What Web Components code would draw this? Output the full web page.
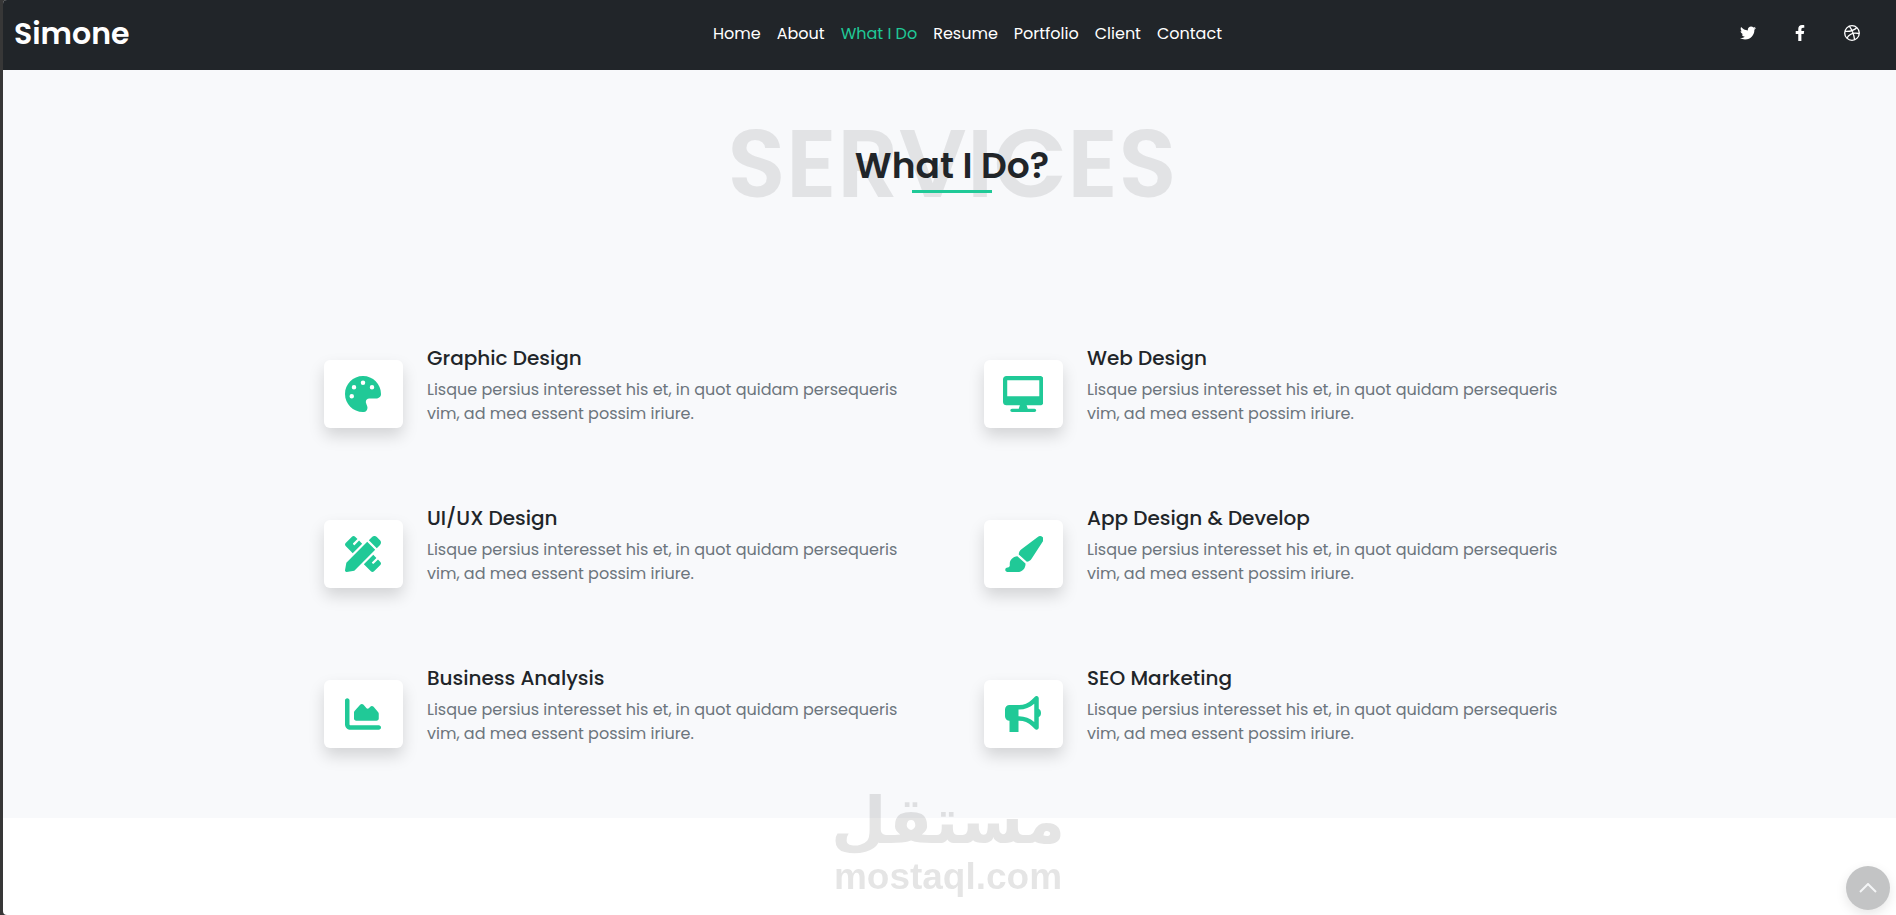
<!DOCTYPE html>
<html lang="en">
<head>
<meta charset="utf-8">
<meta name="viewport" content="width=device-width, initial-scale=1">
<title>Simone</title>
<style>
	body {
		margin: 0;
		background: #373737;
		font-family: Poppins, Inter, "Open Sans", sans-serif;
		font-size: 16px;
		line-height: 24px;
		color: #212529;
	}
</style>
</head>
<body>

<simone-page>
	<site-header slot="header" brand="Simone">
		<nav-item href="#home">Home</nav-item>
		<nav-item href="#about">About</nav-item>
		<nav-item href="#services" active>What I Do</nav-item>
		<nav-item href="#resume">Resume</nav-item>
		<nav-item href="#portfolio">Portfolio</nav-item>
		<nav-item href="#client">Client</nav-item>
		<nav-item href="#contact">Contact</nav-item>
		<social-link slot="social" icon="twitter" label="Twitter"></social-link>
		<social-link slot="social" icon="facebook" label="Facebook"></social-link>
		<social-link slot="social" icon="dribbble" label="Dribbble"></social-link>
	</site-header>

	<services-section id="services">
		<section-title slot="title" backdrop="SERVICES">What I Do?</section-title>
		<service-card icon="palette" heading="Graphic Design">Lisque persius interesset his et, in quot quidam persequeris vim, ad mea essent possim iriure.</service-card>
		<service-card icon="desktop" heading="Web Design">Lisque persius interesset his et, in quot quidam persequeris vim, ad mea essent possim iriure.</service-card>
		<service-card icon="pencil" heading="UI/UX Design">Lisque persius interesset his et, in quot quidam persequeris vim, ad mea essent possim iriure.</service-card>
		<service-card icon="brush" heading="App Design &amp; Develop">Lisque persius interesset his et, in quot quidam persequeris vim, ad mea essent possim iriure.</service-card>
		<service-card icon="chart" heading="Business Analysis">Lisque persius interesset his et, in quot quidam persequeris vim, ad mea essent possim iriure.</service-card>
		<service-card icon="bullhorn" heading="SEO Marketing">Lisque persius interesset his et, in quot quidam persequeris vim, ad mea essent possim iriure.</service-card>
	</services-section>
</simone-page>

<water-mark><span slot="arabic" lang="ar">مستقل</span>mostaql.com</water-mark>
<scroll-top></scroll-top>

<script>
// All the icons used on the page: [viewBox, markup]
const ICONS = {
	twitter: ['0 0 512 512', '<path d="M459.37 151.716c.325 4.548.325 9.097.325 13.645 0 138.72-105.583 298.558-298.558 298.558-59.452 0-114.68-17.219-161.137-47.106 8.447.974 16.568 1.299 25.34 1.299 49.055 0 94.213-16.568 130.274-44.832-46.132-.975-84.792-31.188-98.112-72.772 6.498.974 12.995 1.624 19.818 1.624 9.421 0 18.843-1.3 27.614-3.573-48.081-9.747-84.143-51.98-84.143-102.985v-1.299c13.969 7.797 30.214 12.67 47.431 13.319-28.264-18.843-46.781-51.005-46.781-87.391 0-19.492 5.197-37.36 14.294-52.954 51.655 63.675 129.3 105.258 216.365 109.807-1.624-7.797-2.599-15.918-2.599-24.04 0-57.828 46.782-104.934 104.934-104.934 30.213 0 57.502 12.67 76.67 33.137 23.715-4.548 46.456-13.32 66.599-25.34-7.798 24.366-24.366 44.833-46.132 57.827 21.117-2.273 41.584-8.122 60.426-16.243-14.292 20.791-32.161 39.308-52.628 54.253z"/>'],
	facebook: ['0 0 320 512', '<path d="M279.14 288l14.22-92.66h-88.91v-60.13c0-25.35 12.42-50.06 52.24-50.06h40.42V6.26S260.43 0 225.36 0c-73.22 0-121.08 44.38-121.08 124.72v70.62H22.89V288h81.39v224h100.17V288z"/>'],
	dribbble: ['0 0 16 16', '<g fill="none" stroke="currentColor" stroke-width="1.3"><circle cx="8" cy="8" r="7.3"/><path d="M5.3 1.2C7.8 4.5 9.8 8.8 10.6 14.8M1 6.4c5.2.2 9.4-.9 11.9-3.9M2.9 13.2C5 9.2 9.5 7.2 15.2 8.5"/></g>'],
	palette: ['0 0 512 512', '<path d="M512 256c0 .9 0 1.8 0 2.7c-.4 36.5-33.6 61.3-70.1 61.3H344c-26.5 0-48 21.5-48 48c0 3.4 .4 6.7 1 9.9c2.1 10.2 6.5 20 10.8 29.9c6.1 13.8 12.1 27.5 12.1 42c0 31.8-21.6 60.7-53.4 62c-3.5 .1-7 .2-10.6 .2C114.6 512 0 397.4 0 256S114.6 0 256 0S512 114.6 512 256zM128 288a32 32 0 1 0-64 0 32 32 0 1 0 64 0zm0-96a32 32 0 1 0 0-64 32 32 0 1 0 0 64zM288 96a32 32 0 1 0-64 0 32 32 0 1 0 64 0zm96 96a32 32 0 1 0 0-64 32 32 0 1 0 0 64z"/>'],
	desktop: ['0 0 576 512', '<path d="M48 0C21.5 0 0 21.5 0 48V368c0 26.5 21.5 48 48 48H240l-16 48H128c-13 0-24 10-24 24s11 24 24 24H448c13 0 24-10 24-24s-11-24-24-24H352l-16-48H528c26.5 0 48-21.5 48-48V48c0-26.5-21.5-48-48-48H48zM516 60V288H60V60H516z"/>'],
	pencil: ['0 0 512 512', '<path d="M109.46 244.04l134.58-134.56-44.12-44.12-61.68 61.68a7.919 7.919 0 0 1-11.21 0l-11.21-11.21c-3.1-3.1-3.1-8.12 0-11.21l61.68-61.68-33.64-33.65C131.47-3.1 111.39-3.1 99 9.29L9.29 99c-12.38 12.39-12.39 32.47 0 44.86l100.17 100.18zm388.47-116.8c18.76-18.76 18.75-49.17 0-67.93l-45.25-45.25c-18.76-18.76-49.18-18.76-67.95 0l-46.02 46.01 113.2 113.2 46.02-46.03zM316.08 82.71l-297 296.96L.32 487.11c-2.53 14.49 10.09 27.11 24.59 24.56l107.45-18.84L429.28 195.9 316.08 82.71zm186.63 285.43l-33.64-33.64-61.68 61.68c-3.1 3.1-8.12 3.1-11.21 0l-11.21-11.21c-3.09-3.1-3.09-8.12 0-11.21l61.68-61.68-44.14-44.14L267.93 402.5l100.21 100.2c12.39 12.39 32.47 12.39 44.86 0l89.71-89.7c12.39-12.39 12.39-32.47 0-44.86z"/>'],
	brush: ['0 0 576 512', '<path d="M339.3 367.1c27.3-3.9 51.9-19.4 67.2-42.9L568.2 74.1c12.6-19.5 9.4-45.3-7.6-61.2S517.7-4.4 499.1 9.6L262.4 187.2c-24 18-38.2 46.1-38.4 76.1L339.3 367.1zm-19.6 25.4l-116-104.4C143.9 290.3 96 339.6 96 400c0 3.9 .2 7.8 .6 11.6C98.4 429.1 86.4 448 68.8 448H64c-17.7 0-32 14.3-32 32s14.3 32 32 32H208c61.9 0 112-50.1 112-112c0-2.5-.1-5-.2-7.5z"/>'],
	chart: ['0 0 512 512', '<path d="M64 64c0-17.7-14.3-32-32-32S0 46.3 0 64V400c0 44.2 35.8 80 80 80H480c17.7 0 32-14.3 32-32s-14.3-32-32-32H80c-8.8 0-16-7.2-16-16V64zm96 288H448c17.7 0 32-14.3 32-32V251.8c0-7.6-2.7-15-7.7-20.8l-65.8-76.8c-12.1-14.2-33.7-15-46.9-1.8l-21 21c-10 10-26.4 9.2-35.4-1.6l-39.2-47c-12.6-15.1-35.7-15.4-48.7-.6L135.9 215c-5.1 5.8-7.9 13.3-7.9 21.1v84c0 17.7 14.3 32 32 32z"/>'],
	bullhorn: ['0 0 512 512', '<path d="M480 32c0-12.9-7.8-24.6-19.8-29.6s-25.7-2.2-34.9 6.9L381.7 53c-48 48-113.1 75-181 75H192 160 64c-35.3 0-64 28.7-64 64v96c0 35.3 28.7 64 64 64l0 160H192V352l8.7 0c67.9 0 133 27 181 75l43.6 43.6c9.2 9.2 22.9 11.9 34.9 6.9s19.8-16.6 19.8-29.6V300.4c18.6-8.8 32-32.5 32-60.4s-13.4-51.6-32-60.4V32zm-64 76.7V240 371.3C357.2 317.8 280.5 288 200.7 288H192V192h8.7c79.8 0 156.5-29.8 215.3-83.3z"/>']
};

function icon(name) {
	const [viewBox, markup] = ICONS[name];
	return `<svg viewBox="${viewBox}" fill="currentColor" aria-hidden="true">${markup}</svg>`;
}

// Page frame: dark edge on the left, rounded white sheet
class SimonePage extends HTMLElement {
	constructor() {
		super();
		this.attachShadow({mode: 'open'}).innerHTML = `
			<style>
				:host {
					display: block;
					min-height: 100vh;
					margin-left: 3px;
					background: #fff;
					border-radius: 4px 0 0 4px;
					overflow: hidden;
				}
			</style>
			<slot name="header"></slot>
			<main><slot></slot></main>`;
	}
}

class SiteHeader extends HTMLElement {
	constructor() {
		super();
		this.attachShadow({mode: 'open'}).innerHTML = `
			<style>
				:host { display: block; background: #212529; color: #fff; }
				header {
					display: grid;
					grid-template-columns: 1fr auto 1fr;
					align-items: center;
					height: 70px;
					padding: 0 18px 0 11px;
				}
				.brand {
					padding-bottom: 2px;
					color: inherit;
					font-size: 30px;
					font-weight: 600;
					line-height: 48px;
					text-decoration: none;
				}
				nav { display: flex; gap: 16px; padding: 0 0 2px 43px; }
				.social { display: flex; justify-content: flex-end; padding-bottom: 4px; }
			</style>
			<header>
				<a class="brand" href="#home"></a>
				<nav><slot></slot></nav>
				<div class="social"><slot name="social"></slot></div>
			</header>`;
		this.shadowRoot.querySelector('.brand').textContent = this.getAttribute('brand');
	}
}

class NavItem extends HTMLElement {
	constructor() {
		super();
		this.attachShadow({mode: 'open'}).innerHTML = `
			<style>
				:host { display: block; }
				a { color: #fff; text-decoration: none; }
				:host([active]) a { color: #20c997; }
			</style>
			<a><slot></slot></a>`;
		this.shadowRoot.querySelector('a').href = this.getAttribute('href');
	}
}

class SocialLink extends HTMLElement {
	constructor() {
		super();
		this.attachShadow({mode: 'open'}).innerHTML = `
			<style>
				:host { display: block; }
				a { display: flex; justify-content: center; width: 52px; color: #fff; }
				svg { display: block; height: 16px; }
			</style>
			<a href="#">${icon(this.getAttribute('icon'))}</a>`;
		this.shadowRoot.querySelector('a').setAttribute('aria-label', this.getAttribute('label'));
	}
}

class ServicesSection extends HTMLElement {
	constructor() {
		super();
		this.attachShadow({mode: 'open'}).innerHTML = `
			<style>
				:host { display: block; background: #f8f9fb; }
				section { padding: 46px 0 70px 5px; }
				.grid {
					display: grid;
					grid-template-columns: 1fr 1fr;
					row-gap: 78px;
					max-width: 1320px;
					margin: 134px auto 0;
				}
			</style>
			<section>
				<slot name="title"></slot>
				<div class="grid"><slot></slot></div>
			</section>`;
	}
}

// Heading with a big pale word behind it
class SectionTitle extends HTMLElement {
	constructor() {
		super();
		this.attachShadow({mode: 'open'}).innerHTML = `
			<style>
				:host { display: grid; justify-items: center; align-items: center; height: 96px; }
				.backdrop, h2 { grid-area: 1 / 1; margin: 0; font-weight: 600; }
				.backdrop { color: #e2e3e5; font-size: 96px; line-height: 96px; }
				h2 { z-index: 1; font-size: 36px; line-height: 48px; padding-top: 6px; }
				h2::after {
					content: "";
					display: block;
					width: 80px;
					height: 3px;
					margin: 0 auto;
					background: #20c997;
				}
			</style>
			<div class="backdrop"></div>
			<h2><slot></slot></h2>`;
		this.shadowRoot.querySelector('.backdrop').textContent = this.getAttribute('backdrop');
	}
}

class ServiceCard extends HTMLElement {
	constructor() {
		super();
		this.attachShadow({mode: 'open'}).innerHTML = `
			<style>
				:host { display: block; }
				article { display: flex; gap: 24px; padding: 0 32px; }
				.icon {
					display: flex;
					flex: none;
					justify-content: center;
					box-sizing: border-box;
					width: 79px;
					height: 68px;
					margin-top: 14px;
					padding: 16px 1px 16px 0;
					border-radius: 6px;
					background: #fff;
					color: #20c997;
					box-shadow: 0 8px 16px rgba(0, 0, 0, .15);
				}
				svg { display: block; height: 36px; }
				h3 { margin: 0 0 8px; font-size: 20px; font-weight: 500; line-height: 24px; }
				p { max-width: 480px; margin: 0; color: #6c757d; }
			</style>
			<article>
				<div class="icon">${icon(this.getAttribute('icon'))}</div>
				<div>
					<h3></h3>
					<p><slot></slot></p>
				</div>
			</article>`;
		this.shadowRoot.querySelector('h3').textContent = this.getAttribute('heading');
	}
}

// Floats over the bottom of the page
class WaterMark extends HTMLElement {
	constructor() {
		super();
		this.attachShadow({mode: 'open'}).innerHTML = `
			<style>
				:host {
					position: fixed;
					right: 0;
					bottom: 20px;
					left: 0;
					display: flex;
					flex-direction: column;
					align-items: center;
					gap: 6px;
					opacity: .1;
					color: #000;
					font-family: "Liberation Sans", Arial, sans-serif;
					font-size: 37px;
					font-weight: 700;
					line-height: 36px;
					pointer-events: none;
				}
				.arabic { font-family: "DejaVu Sans", sans-serif; font-size: 64px; line-height: 64px; }
			</style>
			<div class="arabic"><slot name="arabic"></slot></div>
			<div><slot></slot></div>`;
	}
}

class ScrollTop extends HTMLElement {
	constructor() {
		super();
		this.attachShadow({mode: 'open'}).innerHTML = `
			<style>
				:host { position: fixed; right: 6px; bottom: 5px; }
				button {
					display: grid;
					place-items: center;
					width: 44px;
					height: 44px;
					padding: 0;
					border: 0;
					border-radius: 50%;
					background: #c3c4c5;
					color: #f4f5f6;
					box-shadow: 0 4px 12px rgba(0, 0, 0, .1);
				}
				svg { display: block; width: 18px; height: 10px; }
			</style>
			<button type="button" aria-label="Back to top">
				<svg viewBox="0 0 18 10" fill="none" stroke="currentColor" stroke-width="2"><path d="M1 9l8-8 8 8"/></svg>
			</button>`;
		this.shadowRoot.querySelector('button').addEventListener('click', () => window.scrollTo(0, 0));
	}
}

customElements.define('simone-page', SimonePage);
customElements.define('site-header', SiteHeader);
customElements.define('nav-item', NavItem);
customElements.define('social-link', SocialLink);
customElements.define('services-section', ServicesSection);
customElements.define('section-title', SectionTitle);
customElements.define('service-card', ServiceCard);
customElements.define('water-mark', WaterMark);
customElements.define('scroll-top', ScrollTop);
</script>
</body>
</html>
